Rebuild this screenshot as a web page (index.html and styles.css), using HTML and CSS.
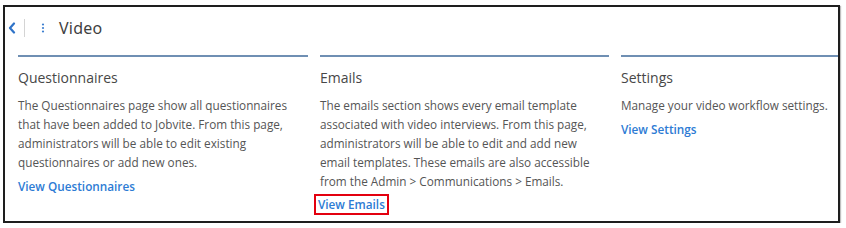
FILE: index.html
```html
<!DOCTYPE html>
<html lang="en">
<head>
<meta charset="utf-8">
<title>Video</title>
<link rel="stylesheet" href="styles.css">
</head>
<body>
<div class="panel">
  <div class="header">
    <svg class="chev" width="8" height="12" viewBox="0 0 8 12" aria-hidden="true">
      <path d="M6 1.5 L2 6 L6 10.5" fill="none" stroke="#2f73c8" stroke-width="2.2" stroke-linecap="round" stroke-linejoin="round"/>
    </svg>
    <span class="vdiv"></span>
    <svg class="kebab" width="4" height="12" viewBox="0 0 4 12" aria-hidden="true">
      <circle cx="2" cy="2.5" r="1.1" fill="#3d7fd0"/>
      <circle cx="2" cy="6" r="1.1" fill="#3d7fd0"/>
      <circle cx="2" cy="9.5" r="1.1" fill="#3d7fd0"/>
    </svg>
    <span class="title">Video</span>
  </div>
  <div class="sections">
    <div class="section">
      <h2 class="sec-title">Questionnaires</h2>
      <p class="sec-text">The Questionnaires page show all questionnaires that have been added to Jobvite. From this page, administrators will be able to edit existing questionnaires or add new ones.</p>
      <a class="sec-link" href="#">View Questionnaires</a>
    </div>
    <div class="section">
      <h2 class="sec-title">Emails</h2>
      <p class="sec-text">The emails section shows every email template associated with video interviews. From this page, administrators will be able to edit and add new email templates. These emails are also accessible from the Admin &gt; Communications &gt; Emails.</p>
      <a class="sec-link highlight" href="#">View Emails</a>
    </div>
    <div class="section">
      <h2 class="sec-title">Settings</h2>
      <p class="sec-text">Manage your video workflow settings.</p>
      <a class="sec-link" href="#">View Settings</a>
    </div>
  </div>
</div>
</body>
</html>
```
FILE: styles.css
```css
html, body {
  margin: 0;
  padding: 0;
  background: #ffffff;
}

body {
  font-family: "Open Sans", "Noto Sans", Arial, sans-serif;
  color: #555555;
}

.panel {
  box-sizing: border-box;
  width: 837px;
  height: 218px;
  margin: 5px 0 0 3px;
  border: 2px solid #1e1e1e;
  box-shadow: 1px 1px 1px rgba(0, 0, 0, 0.25);
}

.header {
  display: flex;
  align-items: center;
  height: 41px;
  padding: 0 0 0 3px;
}

.chev {
  display: block;
}

.vdiv {
  display: block;
  width: 1px;
  height: 18px;
  background: #d4d4d4;
  margin-left: 8px;
}

.kebab {
  display: block;
  margin-left: 16px;
}

.title {
  font-family: "Noto Sans", "Open Sans", Arial, sans-serif;
  font-size: 16px;
  color: #3f3f3f;
  margin-left: 14px;
  letter-spacing: 0.2px;
}

.sections {
  display: grid;
  grid-template-columns: 290px 289px 1fr;
  column-gap: 12px;
  padding-left: 13px;
  margin-top: 7px;
}

.section {
  border-top: 2px solid #6f8fb3;
  min-width: 0;
}

.sec-title {
  margin: 11px 0 0 0;
  font-size: 14px;
  line-height: 20px;
  font-weight: 400;
  color: #474747;
}

.sec-text {
  margin: 8px 0 0 0;
  font-size: 11.75px;
  line-height: 19px;
  color: #555555;
  padding-right: 4px;
}

.sec-link {
  display: inline-block;
  margin-top: 5px;
  font-size: 11.75px;
  line-height: 19px;
  font-weight: 600;
  color: #2d7bd4;
  text-decoration: none;
}

.sec-link.highlight {
  line-height: 17px;
  margin-top: 5px;
  margin-left: -4px;
  padding: 0 2px;
  outline: 2px solid #e3000f;
}
```
